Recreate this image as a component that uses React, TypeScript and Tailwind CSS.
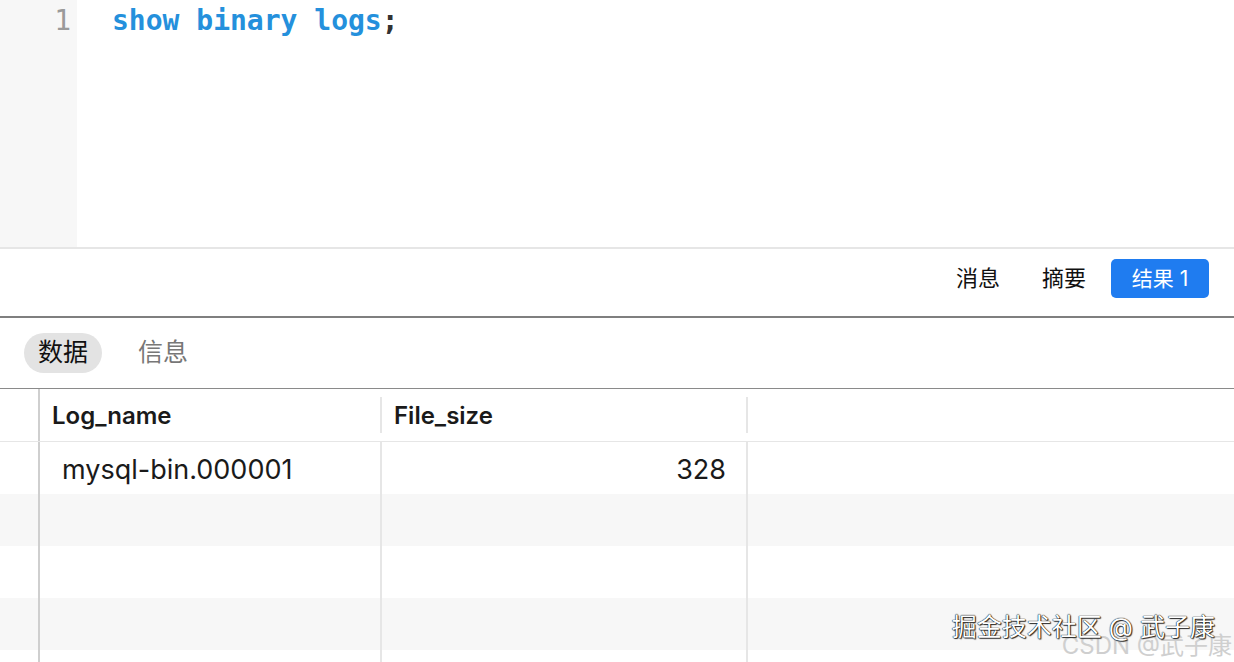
import React from 'react';

const sans = "font-['Inter','Noto_Sans_CJK_SC',sans-serif]";

const rows = [
  { name: 'mysql-bin.000001', size: '328' },
  null,
  null,
  null,
];

function ToolbarTab({ label, active }: { label: string; active?: boolean }) {
  if (active) {
    return (
      <div className="h-[39px] w-[98px] rounded-[5px] bg-[#1f7cf0] text-white text-[21px] flex items-center justify-center">
        {label}
      </div>
    );
  }
  return <div className="text-[22px] text-[#111]">{label}</div>;
}

export default function App() {
  return (
    <div className={`w-[1234px] h-[662px] overflow-hidden bg-white relative ${sans}`}>
      {/* editor */}
      <div className="h-[247px] flex">
        <div className="w-[77px] bg-[#f7f7f7] pr-[6px] pt-[1px] text-right font-['DejaVu_Sans_Mono',monospace] text-[28px] leading-[40px] text-[#9a9a9a]">
          1
        </div>
        <div className="flex-1 pl-[35px] pt-[1px] font-['DejaVu_Sans_Mono',monospace] text-[28px] leading-[40px] font-bold">
          <span className="text-[#2490dc]">show binary logs</span>
          <span className="text-[#333]">;</span>
        </div>
      </div>
      <div className="h-[2px] bg-[#e6e6e6]" />

      {/* result toolbar */}
      <div className="h-[67px] flex items-center justify-end gap-[42px] pr-[25px] pb-[8px]">
        <ToolbarTab label="消息" />
        <div className="flex items-center gap-[25px]">
          <ToolbarTab label="摘要" />
          <ToolbarTab label="结果 1" active />
        </div>
      </div>
      <div className="h-[2px] bg-[#7f7f7f]" />

      {/* data / info tabs */}
      <div className="h-[70px] flex items-center pl-[24px] gap-[36px]">
        <div className="h-[40px] w-[78px] rounded-full bg-[#e3e3e3] text-[25px] text-[#111] flex items-center justify-center">
          数据
        </div>
        <div className="text-[25px] text-[#777]">信息</div>
      </div>
      <div className="h-px bg-[#8a8a8a]" />

      {/* grid */}
      <div className="flex h-[53px] border-b border-[#e6e6e6]">
        <div className="w-[40px] border-r-2 border-[#cfcfcf]" />
        <div className="w-[342px] flex items-center">
          <div className="flex-1 pl-[12px] pt-[2px] text-[24px] font-semibold text-[#1a1a1a]">Log_name</div>
          <div className="w-[2px] h-[36px] bg-[#e6e6e6]" />
        </div>
        <div className="w-[366px] flex items-center">
          <div className="flex-1 pl-[12px] pt-[2px] text-[24px] font-semibold text-[#1a1a1a]">File_size</div>
          <div className="w-[2px] h-[36px] bg-[#e6e6e6]" />
        </div>
        <div className="flex-1" />
      </div>
      {rows.map((row, i) => (
        <div key={i} className={`flex h-[52px] ${i % 2 === 1 ? 'bg-[#f7f7f7]' : 'bg-white'}`}>
          <div className="w-[40px] border-r-2 border-[#cfcfcf]" />
          <div className="w-[342px] border-r-2 border-[#e6e6e6] flex items-center pl-[22px] pt-[4px] text-[27px] text-[#1a1a1a]">
            {row?.name}
          </div>
          <div className="w-[366px] border-r-2 border-[#e6e6e6] flex items-center justify-end pr-[20px] pt-[4px] text-[27px] text-[#1a1a1a]">
            {row?.size}
          </div>
          <div className="flex-1" />
        </div>
      ))}
      <div className="flex h-[20px]">
        <div className="w-[40px] border-r-2 border-[#cfcfcf]" />
        <div className="w-[342px] border-r-2 border-[#e6e6e6]" />
        <div className="w-[366px] border-r-2 border-[#e6e6e6]" />
      </div>

      {/* watermarks */}
      <div className="absolute right-[2px] bottom-[4px] text-[24px] text-[#cfcfcf] leading-none">
        CSDN @武子康
      </div>
      <div className="absolute right-[19px] bottom-[22px] text-[25px] text-white leading-none [text-shadow:0_0_1px_#000,0_0_1px_#000,1px_1px_1px_#333]">
        掘金技术社区 @ 武子康
      </div>
    </div>
  );
}
